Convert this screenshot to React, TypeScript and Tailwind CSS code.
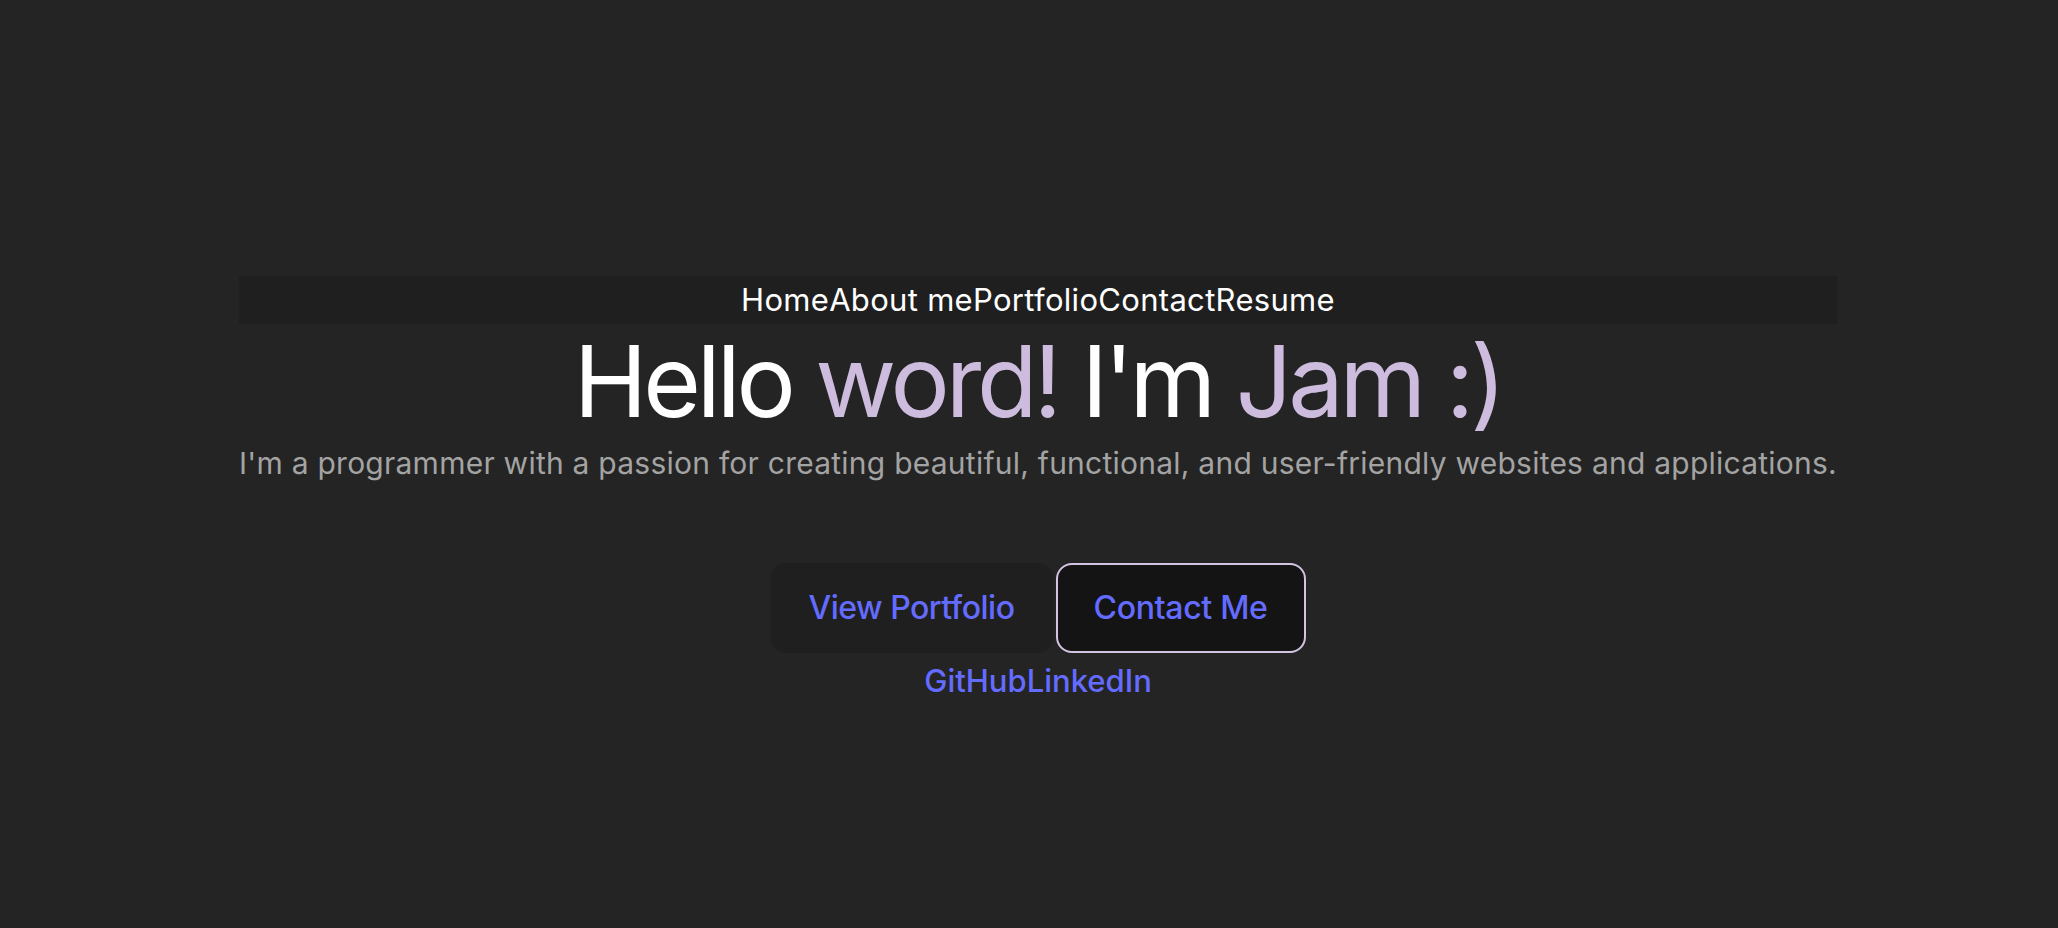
import React from 'react';

const navItems = ['Home', 'About me', 'Portfolio', 'Contact', 'Resume'];

export default function App() {
  return (
    <div className="min-h-screen bg-[#242424] text-white font-['Inter',sans-serif] pt-[276px] pl-[18px]">
      <div className="mx-auto w-fit flex flex-col items-center text-center">
        <nav className="w-full h-[48px] bg-[#1f1f1f] flex items-center justify-center text-[31px] tracking-[0.01em]">
          {navItems.map(n => (
            <a key={n} href="#" className="text-white">{n}</a>
          ))}
        </nav>
        <h1 className="mt-[8px] text-[99px] leading-none font-normal tracking-[-0.042em]">
          Hello <span className="text-[#cdbcdd]">word!</span> I'm <span className="text-[#cdbcdd]">Jam :)</span>
        </h1>
        <p className="mt-[14px] text-[30px] leading-[1.2] tracking-[0.008em] text-[#a3a3a3]">
          I'm a programmer with a passion for creating beautiful, functional, and user-friendly websites and applications.
        </p>
        <div className="mt-[82px] flex items-center gap-[3px]">
          <button className="h-[90px] px-[37px] rounded-[16px] bg-[#1f1f1f] border border-transparent text-[#646cff] text-[32px] tracking-[-0.015em] font-medium">
            View Portfolio
          </button>
          <button className="h-[90px] px-[36px] rounded-[16px] bg-[#141414] border-2 border-[#d3c4e2] text-[#646cff] text-[32px] tracking-[-0.01em] font-medium">
            Contact Me
          </button>
        </div>
        <div className="mt-[8px] flex text-[31px] font-medium text-[#646cff] leading-[1.3]">
          <a href="#">GitHub</a>
          <a href="#">LinkedIn</a>
        </div>
      </div>
    </div>
  );
}
